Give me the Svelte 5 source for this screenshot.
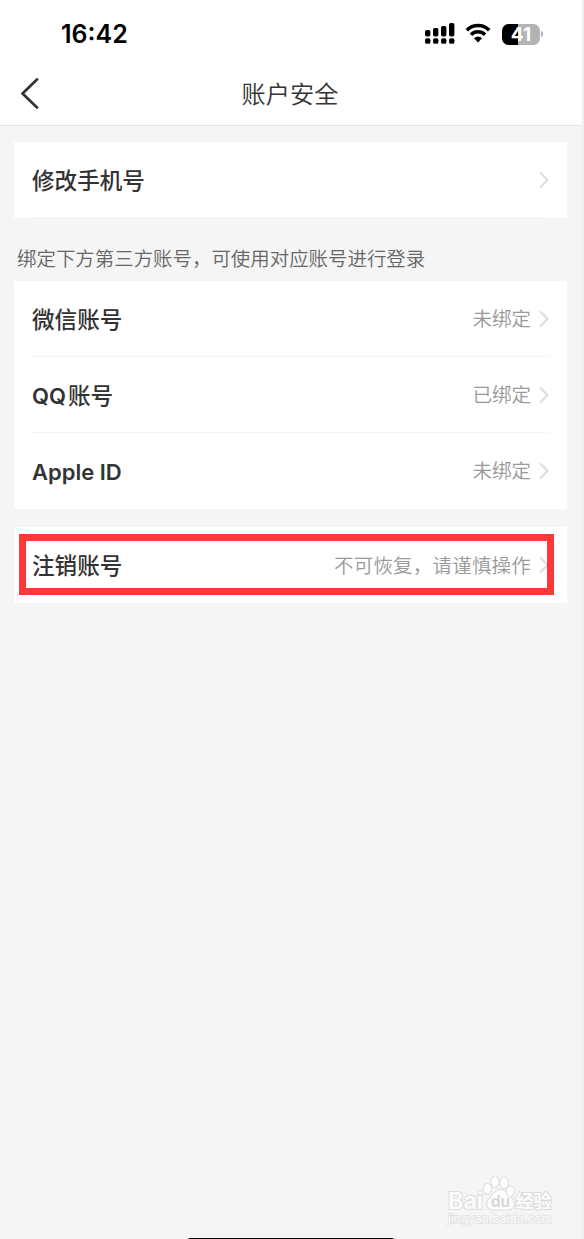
<script>
  const groups = [
    {
      rows: [{ title: '修改手机号', value: '' }],
      divided: true,
    },
    {
      hint: '绑定下方第三方账号，可使用对应账号进行登录',
      rows: [
        { title: '微信账号', value: '未绑定' },
        { prefix: 'QQ', title: '账号', value: '已绑定' },
        { prefix: 'Apple ID', title: '', value: '未绑定' },
      ],
    },
    {
      rows: [{ title: '注销账号', value: '不可恢复，请谨慎操作', wide: true }],
      marked: true,
    },
  ];

  const signal = [
    { x: 0, top: 7 },
    { x: 8, top: 5 },
    { x: 16, top: 3 },
    { x: 24, top: 0 },
  ];
</script>

<div class="page">
  <header>
    <div class="status">
      <span class="time">16:42</span>
      <div class="status-icons">
        <svg width="30" height="22" viewBox="0 0 30 22">
          {#each signal as bar}
            <rect x={bar.x} y={bar.top} width="5.4" height={13.5 - bar.top} rx="1.7" />
            <rect x={bar.x} y="15.3" width="5.4" height="5.5" rx="1.9" />
          {/each}
        </svg>
        <svg class="wifi" width="26" height="20" viewBox="0 0 26 20">
          <path d="M1.8 7.2a15.8 15.8 0 0 1 22.4 0M6 11.7a9.9 9.9 0 0 1 14 0" />
          <path class="dot" d="M13 19.4l-4-4.2a5.7 5.7 0 0 1 8 0z" />
        </svg>
        <div class="battery"><span>41</span></div>
        <i class="battery-tip"></i>
      </div>
    </div>
    <nav>
      <svg class="back" width="20" height="32" viewBox="0 0 20 32">
        <path d="M17 2.5L2.5 16.5L17 30.5" />
      </svg>
      <h1>账户安全</h1>
    </nav>
  </header>

  <main>
    {#each groups as group}
      {#if group.hint}
        <p class="hint">{group.hint}</p>
      {/if}
      <section class="card" class:divided={group.divided} class:marked={group.marked}>
        {#each group.rows as row}
          <div class="row">
            <span class="title">{#if row.prefix}<span class="prefix">{row.prefix}</span>{/if}{row.title}</span>
            <span class="value" class:wide={row.wide}>{row.value}</span>
            <svg class="chevron" width="10" height="18" viewBox="0 0 10 18">
              <path d="M1.8 2L8.4 9L1.8 16" />
            </svg>
          </div>
        {/each}
      </section>
    {/each}
  </main>

  <svg class="watermark" width="112" height="56" viewBox="0 0 112 56">
    <g class="mark">
      <text x="3" y="36.5" font-size="23.5" font-weight="600" textLength="35" lengthAdjust="spacingAndGlyphs">Bai</text>
      <path d="M55.5 18c-5 0-7 4.500-10.500 8-5 5-3 11.500 3 11.500h15c6 0 8-6.500 3-11.500-3.500-3.500-5.500-8-10.500-8z" />
      <ellipse cx="42.3" cy="17" rx="3.7" ry="5" />
      <ellipse cx="50" cy="9.7" rx="3.7" ry="5.3" />
      <ellipse cx="59.2" cy="10.7" rx="3.7" ry="5.3" />
      <ellipse cx="65.3" cy="19.3" rx="3.6" ry="5" />
    </g>
    <text class="du" x="46" y="34.5" font-size="15.5" font-weight="700" textLength="19" lengthAdjust="spacingAndGlyphs">du</text>
    <text class="mark" x="70.5" y="35.5" font-size="18" font-weight="700">经验</text>
    <text class="mark small" x="3" y="50.5" font-size="11.5" textLength="104" lengthAdjust="spacingAndGlyphs">jingyan.baidu.com</text>
  </svg>
  <div class="home-bar"></div>
</div>

<style>
  :global(body) {
    margin: 0;
    background: #f0f0f0;
  }

  .page {
    position: relative;
    box-sizing: border-box;
    width: 584px;
    height: 1239px;
    overflow: hidden;
    background: #f5f5f5;
    border-right: 2px solid #f0f0f0;
    color: #333;
    font-family: Inter, 'Noto Sans CJK SC', sans-serif;
  }

  header {
    height: 125px;
    background: #fff;
    border-bottom: 1px solid #e3e3e3;
  }

  .status {
    display: flex;
    align-items: center;
    justify-content: space-between;
    height: 68px;
    padding: 0 39px 0 61px;
  }

  .time {
    color: #000;
    font-size: 25px;
    font-weight: 600;
  }

  .status-icons {
    display: flex;
    align-items: center;
  }

  .wifi {
    margin: 0 11px 2px 10px;
  }

  .wifi path {
    fill: none;
    stroke: #000;
    stroke-width: 3.6;
  }

  .wifi .dot {
    fill: #000;
    stroke: none;
  }

  .battery {
    width: 38px;
    height: 21px;
    border-radius: 6.5px;
    background: linear-gradient(90deg, #000 41%, #b3b3b3 41%);
    color: #fff;
    font-size: 19px;
    font-weight: 700;
    line-height: 21px;
    text-align: center;
  }

  .battery-tip {
    width: 2px;
    height: 6px;
    margin-left: 1px;
    border-radius: 0 2px 2px 0;
    background: #b3b3b3;
  }

  nav {
    display: grid;
    grid-template-columns: 40px 1fr 42px;
    align-items: center;
    height: 50px;
    padding: 0 20px;
  }

  .back path {
    fill: none;
    stroke: #333;
    stroke-width: 2.7;
    stroke-linecap: round;
    stroke-linejoin: round;
  }

  h1 {
    margin: 0;
    padding-top: 3px;
    font-size: 24.2px;
    font-weight: 350;
    line-height: 36px;
    text-align: center;
  }

  main {
    padding: 16px 15px 0 14px;
  }

  .hint {
    box-sizing: border-box;
    height: 63px;
    margin: 0;
    padding: 20px 0 0 3px;
    color: #666;
    font-family: 'Noto Sans CJK SC', sans-serif;
    font-size: 19.45px;
    font-weight: 350;
    line-height: 40px;
    white-space: nowrap;
  }

  .card {
    position: relative;
    background: #fff;
  }

  .row {
    display: flex;
    align-items: center;
    box-sizing: border-box;
    height: 76px;
    margin: 0 18px;
  }

  .row + .row {
    box-shadow: 0 -1px #f5f5f5;
  }

  .divided .row {
    box-shadow: inset 0 -1px #f5f5f5;
  }

  .title {
    flex: 1;
    padding-top: 1px;
    font-size: 22.6px;
    font-weight: 500;
    line-height: 32px;
  }

  .prefix {
    margin-right: 2px;
    font-size: 22px;
    font-weight: 600;
  }

  .value {
    padding-bottom: 3px;
    color: #999;
    font-size: 19.5px;
    font-weight: 350;
  }

  .wide {
    padding-bottom: 1px;
    letter-spacing: 0.2px;
  }

  .chevron {
    margin-left: 8px;
  }

  .chevron path {
    fill: none;
    stroke: #ddd;
    stroke-width: 2.1;
    stroke-linecap: round;
    stroke-linejoin: round;
  }

  .marked {
    margin-top: 18px;
  }

  /* warning frame around the account removal row */
  .marked::after {
    content: '';
    position: absolute;
    top: 7px;
    left: 5px;
    width: 521px;
    height: 47px;
    border: 7px solid #fd3838;
  }

  .watermark {
    position: absolute;
    left: 445px;
    top: 1172px;
  }

  .mark {
    fill: #fdfdfd;
    stroke: #dcdcdc;
    stroke-width: 2;
    paint-order: stroke;
  }

  .small {
    stroke: #e0e0e0;
    stroke-width: 1.5;
  }

  .du {
    fill: #d8d8d8;
  }

  .home-bar {
    position: absolute;
    left: 187px;
    bottom: -6px;
    width: 208px;
    height: 7.5px;
    border-radius: 4px;
    background: #000;
  }
</style>
